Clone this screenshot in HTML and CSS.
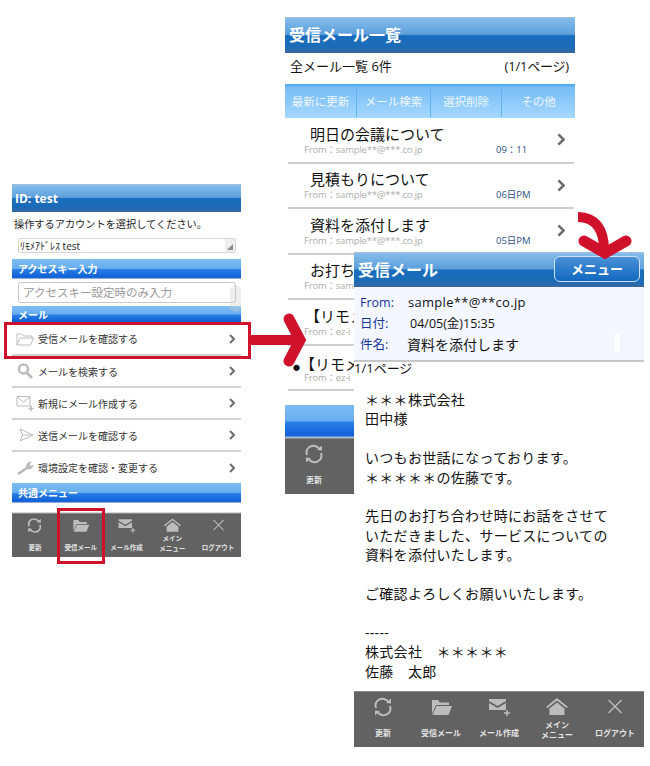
FILE: index.html
```html
<!DOCTYPE html>
<html lang="ja">
<head>
<meta charset="utf-8">
<title>受信メール</title>
<link rel="stylesheet" href="styles.css">
</head>
<body>
<svg class="sprite" aria-hidden="true">
  <symbol id="i-refresh" viewBox="0 0 24 24"><path d="M5 13 C3 7 8 3 13 4 C15 4.500 16.500 5.500 17.500 7 M19 11 C21 17 16 21 11 20 C9 19.500 7.500 18.500 6.500 17" fill="none" stroke="currentColor" stroke-width="2"/><path d="M15 8 L20 8.500 L20 3.500 Z M9 16 L4 15.500 L4 20.500 Z" fill="currentColor"/></symbol>
  <symbol id="i-folder" viewBox="0 0 24 24"><path d="M3 19 V5 H9 L11 7.500 H20 V10 H7 L3 19 Z" fill="currentColor"/><path d="M3.500 20 L7.500 11 H23 L19.500 20 Z" fill="currentColor"/></symbol>
  <symbol id="i-mailplus" viewBox="0 0 24 24"><path d="M2 4 H19 V6 L10.500 11 L2 6 Z M2 8 L10.500 13 L19 8 V15 H2 Z" fill="currentColor"/><path d="M20 15 V21 M17 18 H23" fill="none" stroke="currentColor" stroke-width="1.500"/></symbol>
  <symbol id="i-home" viewBox="0 0 24 24"><path d="M1 12 L12 3 L23 12 L21.500 13 L12 5.500 L2.500 13 Z" fill="currentColor"/><path d="M4.500 13.500 L12 7.500 L19.500 13.500 V20 H4.500 Z" fill="currentColor"/></symbol>
  <symbol id="i-close" viewBox="0 0 24 24"><path d="M5.500 5 L18.500 18 M18.500 5 L5.500 18" fill="none" stroke="currentColor" stroke-width="1.300"/></symbol>
  <symbol id="i-chev" viewBox="0 0 6 10"><path d="M1 1 L5 5 L1 9" fill="none" stroke="currentColor" stroke-width="2"/></symbol>
</svg>

<section class="phone phone-list">
  <h1 class="head head-large">受信メール一覧</h1>
  <div class="summary"><span>全メール一覧 6件</span><span class="pages">(1/1ページ)</span></div>
  <nav class="tabs">
    <span class="tab tab-a">最新に更新</span>
    <span class="tab tab-b">メール検索</span>
    <span class="tab tab-c">選択削除</span>
    <span class="tab tab-d">その他</span>
  </nav>
  <ul class="mails">
    <li class="mail"><div class="mail-body"><div class="mail-title">明日の会議について</div><div class="mail-sub"><span class="mail-from">From：sample**@***.co.jp</span><span class="mail-time">09：11</span></div></div><svg class="chev-lg"><use href="#i-chev"/></svg></li>
    <li class="mail"><div class="mail-body"><div class="mail-title">見積もりについて</div><div class="mail-sub"><span class="mail-from">From：sample**@***.co.jp</span><span class="mail-time">06日PM</span></div></div><svg class="chev-lg"><use href="#i-chev"/></svg></li>
    <li class="mail"><div class="mail-body"><div class="mail-title">資料を添付します</div><div class="mail-sub"><span class="mail-from">From：sample**@***.co.jp</span><span class="mail-time">05日PM</span></div></div><svg class="chev-lg"><use href="#i-chev"/></svg></li>
    <li class="mail"><div class="mail-body"><div class="mail-title">お打ち</div><div class="mail-sub"><span class="mail-from">From：sam</span></div></div></li>
    <li class="mail mail-notice"><div class="mail-body"><div class="mail-title">【リモメ</div><div class="mail-sub"><span class="mail-from">From：ez-i</span></div></div></li>
    <li class="mail mail-unread"><div class="mail-body"><div class="mail-title">【リモメ</div><div class="mail-sub"><span class="mail-from">From：ez-i</span></div></div></li>
  </ul>
  <div class="gap-list"></div>
  <div class="section section-tall"></div>
  <div class="toolbar">
    <div class="tool"><svg class="tool-icon"><use href="#i-refresh"/></svg><span class="tool-label">更新</span></div>
  </div>
</section>

<section class="phone phone-menu">
  <h1 class="head head-small">ID: test</h1>
  <p class="prompt">操作するアカウントを選択してください。</p>
  <div class="select"><span>ﾘﾓﾒｱﾄﾞﾚｽ test</span><i class="select-arrow"></i></div>
  <h2 class="section section-first">アクセスキー入力</h2>
  <div class="field">アクセスキー設定時のみ入力</div>
  <h2 class="section section-mail">メール</h2>
  <ul class="menu">
    <li class="menu-row menu-row-first">
      <svg class="menu-icon" viewBox="0 0 18 18"><path d="M1 15 V4 H6 L8 6 H16 V8 M1 15 L4 8 H17.500 L14.500 15 Z" fill="none" stroke="currentColor"/></svg>
      <span class="menu-text">受信メールを確認する</span><svg class="chev"><use href="#i-chev"/></svg>
    </li>
    <li class="menu-row">
      <svg class="menu-icon" viewBox="0 0 18 18"><circle cx="7.500" cy="7" r="4.500" fill="none" stroke="currentColor" stroke-width="2.500"/><path d="M11 11 L16 16" fill="none" stroke="currentColor" stroke-width="3"/></svg>
      <span class="menu-text">メールを検索する</span><svg class="chev"><use href="#i-chev"/></svg>
    </li>
    <li class="menu-row">
      <svg class="menu-icon" viewBox="0 0 18 18"><path d="M1 2.500 H14 V12 H1 Z M1 3 L7.500 8 L14 3" fill="none" stroke="currentColor"/><path d="M15 11.500 V17 M12.500 14.500 H17.500" fill="none" stroke="currentColor" stroke-width="1.500"/></svg>
      <span class="menu-text">新規にメール作成する</span><svg class="chev"><use href="#i-chev"/></svg>
    </li>
    <li class="menu-row">
      <svg class="menu-icon" viewBox="0 0 18 18"><path d="M4 3 L17 9 L4 15 L6.500 9 Z M6.500 9 H17" fill="none" stroke="currentColor"/></svg>
      <span class="menu-text">送信メールを確認する</span><svg class="chev"><use href="#i-chev"/></svg>
    </li>
    <li class="menu-row menu-row-last">
      <svg class="menu-icon" viewBox="0 0 18 18"><path d="M1 14 L10 8 C10 4 13 2 16 3 L13.500 5 L15 7 L17.500 5.500 C17.500 9 14 11 11.500 10 L3 16 Z" fill="currentColor"/></svg>
      <span class="menu-text">環境設定を確認・変更する</span><svg class="chev"><use href="#i-chev"/></svg>
    </li>
  </ul>
  <h2 class="section section-common">共通メニュー</h2>
  <div class="gap-menu"></div>
  <div class="toolbar toolbar-small">
    <div class="tool"><svg class="tool-icon"><use href="#i-refresh"/></svg><span class="tool-label">更新</span></div>
    <div class="tool"><svg class="tool-icon"><use href="#i-folder"/></svg><span class="tool-label">受信メール</span></div>
    <div class="tool"><svg class="tool-icon"><use href="#i-mailplus"/></svg><span class="tool-label">メール作成</span></div>
    <div class="tool"><svg class="tool-icon"><use href="#i-home"/></svg><span class="tool-label tool-label-two">メイン<br>メニュー</span></div>
    <div class="tool"><svg class="tool-icon"><use href="#i-close"/></svg><span class="tool-label">ログアウト</span></div>
  </div>
</section>

<section class="phone phone-detail">
  <header class="head head-large head-split"><span>受信メール</span><span class="menu-btn">メニュー</span></header>
  <dl class="info">
    <div class="info-row"><dt>From:</dt><dd class="info-addr">sample**@**co.jp</dd></div>
    <div class="info-row"><dt>日付:</dt><dd class="info-date">04/05(金)15:35</dd></div>
    <div class="info-row"><dt>件名:</dt><dd class="info-subject">資料を添付します</dd></div>
    <i class="info-mark"></i>
  </dl>
  <div class="page-no">1/1ページ</div>
  <div class="message">＊＊＊株式会社<br>田中様<br><br>いつもお世話になっております。<br>＊＊＊＊＊の佐藤です。<br><br>先日のお打ち合わせ時にお話をさせて<br>いただきました、サービスについての<br>資料を添付いたします。<br><br>ご確認よろしくお願いいたします。<br><br>-----<br>株式会社　＊＊＊＊＊<br>佐藤　太郎</div>
  <div class="toolbar">
    <div class="tool"><svg class="tool-icon"><use href="#i-refresh"/></svg><span class="tool-label">更新</span></div>
    <div class="tool"><svg class="tool-icon"><use href="#i-folder"/></svg><span class="tool-label">受信メール</span></div>
    <div class="tool"><svg class="tool-icon"><use href="#i-mailplus"/></svg><span class="tool-label">メール作成</span></div>
    <div class="tool"><svg class="tool-icon"><use href="#i-home"/></svg><span class="tool-label tool-label-two">メイン<br>メニュー</span></div>
    <div class="tool"><svg class="tool-icon"><use href="#i-close"/></svg><span class="tool-label">ログアウト</span></div>
  </div>
</section>

<div class="mark mark-row"></div>
<div class="mark mark-tool"></div>
<svg class="arrows" viewBox="0 0 650 766" aria-hidden="true">
  <path class="arrow-line" d="M251 340 H300"/>
  <path class="arrow-head" d="M289 319 L300 340 L289 361"/>
  <path class="arrow-line" d="M578 217 C595 217 604 229 604 250"/>
  <path class="arrow-head" d="M584 241 L605 253 L626 241"/>
</svg>
</body>
</html>
```

FILE: styles.css
```css
* { box-sizing: border-box; }
html, body { margin: 0; padding: 0; }
body {
  position: relative;
  width: 650px;
  height: 766px;
  overflow: hidden;
  background: #fff;
  color: #111;
  font-family: "Open Sans", "Noto Sans CJK JP", sans-serif;
}
h1, h2, p, ul, dl, dd { margin: 0; padding: 0; }
ul { list-style: none; }
.sprite { display: none; }

/* three phone captures on a free canvas */
.phone { position: absolute; display: flex; flex-direction: column; background: #fff; }
.phone-menu { left: 12px; top: 184px; width: 229px; height: 374px; }
.phone-list { left: 285px; top: 17px; width: 290px; height: 477px; }
.phone-detail { left: 354px; top: 252px; width: 290px; height: 495px; }

.head {
  display: flex;
  align-items: center;
  color: #fff;
  font-weight: 700;
  background: linear-gradient(#a6bfd8 0, #82bbea 2px, #5d9fdc 48%, #186dbd 52%, #1d6bb6 85%, #38689f 100%);
}
.head-large { height: 36px; padding: 0 0 2px 4px; font-size: 16px; }
.phone-detail .head-large { height: 35px; }
.head-small { height: 28px; padding-left: 3px; font-size: 12px; }
.head-split { justify-content: space-between; padding-right: 4px; }

.section {
  display: flex;
  align-items: center;
  padding: 0 0 2px 6px;
  color: #fff;
  font-size: 10px;
  font-weight: 700;
  background: linear-gradient(#7fbdf3 0, #66adf0 48%, #2a80e6 52%, #0f5fd6 92%, #c6cfd8 100%);
}
.section-first { height: 20px; }
.section-mail { height: 17px; margin-top: 3px; padding-bottom: 0; }
.section-common { height: 20px; }
.section-tall { height: 33px; flex: none; }

/* left phone */
.prompt { height: 24px; padding-left: 2px; font-size: 10.200px; line-height: 24px; color: #222; }
.select {
  display: flex;
  align-items: center;
  justify-content: space-between;
  height: 15px;
  margin: 2px 5px 6px 6px;
  padding-left: 1px;
  font-size: 10px;
  color: #222;
  border: 1px solid #d6d6d6;
  border-radius: 2px;
}
.select-arrow {
  display: flex;
  align-items: flex-end;
  justify-content: center;
  width: 10px;
  height: 13px;
  padding-bottom: 2px;
  background: #eee;
}
.select-arrow::after {
  content: "";
  width: 0;
  height: 0;
  border-left: 6px solid transparent;
  border-bottom: 6px solid #8c8c8c;
}
.field {
  position: relative;
  height: 21px;
  margin: 3px 5px 0 6px;
  padding-left: 4px;
  font-size: 11.500px;
  line-height: 19px;
  color: #9a9a9a;
  border: 1px solid #c8c8c8;
  border-radius: 3px;
}
.field::after {
  content: "";
  position: absolute;
  right: -6px;
  top: 2px;
  width: 11px;
  height: 27px;
  border-radius: 6px;
  background: rgba(205, 205, 205, 0.35);
}
.menu-row {
  display: flex;
  align-items: center;
  height: 32px;
  padding: 0 6px 0 4px;
  border-bottom: 2px solid #d4d4d4;
}
.menu-row-first { height: 33px; }
.menu-row-last { height: 31px; border-bottom: 0; }
.menu-icon { width: 18px; height: 18px; flex: none; color: #bcbcbc; }
.menu-text { flex: 1; padding-left: 4px; font-size: 10px; color: #333; }
.chev { width: 6px; height: 10px; flex: none; color: #6f6f6f; }
.gap-menu { height: 10px; flex: none; border-bottom: 1px solid #d8d8d8; }

/* middle phone */
.summary {
  display: flex;
  justify-content: space-between;
  align-items: center;
  height: 31px;
  padding: 0 6px 7px 5px;
  font-size: 13px;
  color: #111;
}
.pages { font-size: 13px; letter-spacing: -0.200px; }
.tabs {
  display: flex;
  height: 34px;
  flex: none;
  padding-bottom: 1px;
  background: linear-gradient(#58aef2 0, #77bdf5 8%, #a6d8ff 100%);
  border-top: 1px solid #4ba6ee;
}
.tab {
  display: flex;
  align-items: center;
  justify-content: center;
  font-size: 11.500px;
  color: #eef6ff;
  border-right: 1px solid #62b2f0;
}
.tab-a { width: 72px; }
.tab-b { width: 74px; }
.tab-c { width: 71px; }
.tab-d { flex: 1; border-right: 0; }
.mails { flex: none; }
.mail {
  display: flex;
  align-items: center;
  height: 45.500px;
  margin: 0 1px 0 3px;
  padding-right: 9px;
  border-bottom: 2px solid #cfcfcf;
}
.mail-body { flex: 1; }
.mail-title { height: 20px; padding-left: 22px; font-size: 15px; line-height: 20px; color: #111; white-space: nowrap; }
.mail-sub { display: flex; padding-left: 16px; font-size: 9.500px; line-height: 12px; }
.mail-from { width: 192px; color: #adadad; letter-spacing: -0.200px; }
.mail-time { color: #2c4f80; }
.mail-notice .mail-title { margin-left: -5px; }
.mail-unread .mail-title { margin-left: -17px; }
.mail-unread .mail-title::before { content: "●"; font-size: 7px; line-height: 0; }
.mail-unread .mail-sub { margin-top: -2px; }
.mail-unread .mail-body { padding-top: 3px; }
.chev-lg { width: 8px; height: 13px; flex: none; color: #6f6f6f; }
.gap-list { height: 14px; flex: none; }

/* right phone */
.menu-btn {
  display: flex;
  align-items: center;
  justify-content: center;
  width: 86px;
  height: 26px;
  font-size: 13px;
  border: 1px solid #cfe3f6;
  border-radius: 6px;
  background: linear-gradient(#4a90d8, #1268c0);
}
.info {
  position: relative;
  height: 75px;
  flex: none;
  padding: 5px 0 0 6px;
  background: #f4f7ff;
  border-bottom: 2px solid #c6c6c8;
}
.info-row { display: grid; grid-template-columns: 48px 1fr; line-height: 21px; font-size: 13px; }
.info-row dt { color: #14349c; font-size: 12.500px; }
.info-addr { font-size: 13px; letter-spacing: 0.300px; }
.info-date { padding-left: 2px; font-size: 12.500px; }
.info-subject { font-size: 14px; margin-left: -1px; }
.info-mark { position: absolute; left: 261px; top: 47px; width: 5px; height: 18px; background: #fff; }
.page-no { flex: none; height: 12px; font-size: 13px; line-height: 12px; color: #111; }
.message { flex: 1; padding: 16px 0 0 11px; font-size: 14px; line-height: 19.400px; letter-spacing: 0.300px; color: #111; }

/* bottom toolbars */
.toolbar {
  display: flex;
  height: 56px;
  flex: none;
  padding-top: 3px;
  color: #bdbdbd;
  background: #626262;
  border-top: 1px solid #8a8a8a;
}
.tool { flex: 0 0 20%; display: flex; flex-direction: column; align-items: center; min-width: 0; }
.tool-icon { width: 24px; height: 24px; flex: none; }
.tool-label {
  display: flex;
  align-items: center;
  height: 24px;
  margin-top: 2px;
  text-align: center;
  font-size: 8px;
  line-height: 10px;
  font-weight: 700;
  color: #e4e4e4;
  white-space: nowrap;
}
.tool-label-two { margin-top: -1px; }
.toolbar-small { height: 44px; padding-top: 2px; }
.toolbar-small .tool-icon { width: 19px; height: 19px; }
.toolbar-small .tool-label { height: 19px; margin-top: 3px; font-size: 6.500px; line-height: 10px; }
.toolbar-small .tool-label-two { margin-top: -1px; }

/* annotations on top of the captures */
.mark { position: absolute; border: 3px solid #d0112b; }
.mark-row { left: 4px; top: 322px; width: 247px; height: 37px; }
.mark-tool { left: 57px; top: 508px; width: 48px; height: 56px; }
.arrows { position: absolute; left: 0; top: 0; width: 650px; height: 766px; pointer-events: none; }
.arrow-line { fill: none; stroke: #d0112b; stroke-width: 10; }
.arrow-head { fill: none; stroke: #d0112b; stroke-width: 11; stroke-linecap: round; stroke-linejoin: miter; }
```
